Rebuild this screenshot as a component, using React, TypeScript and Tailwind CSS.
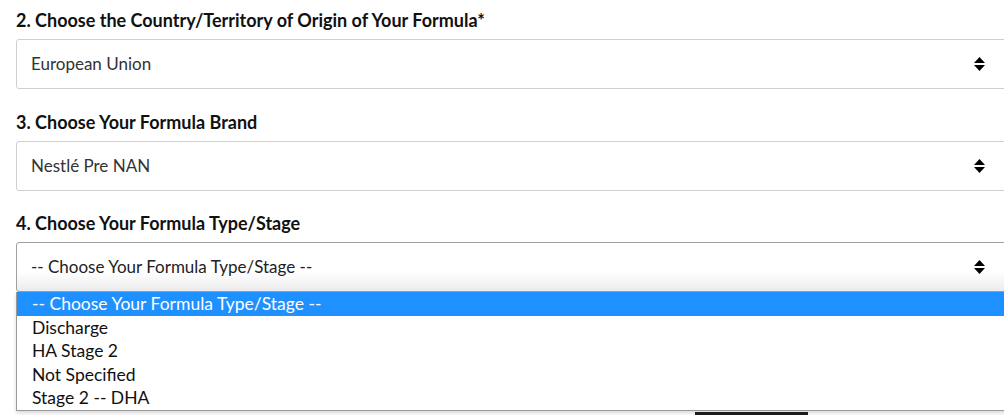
import React from 'react';

const font = { fontFamily: '"Lato", "Open Sans", Arial, sans-serif' };

const Arrows = () => (
  <svg width="11" height="14" viewBox="0 0 11 14" className="shrink-0">
    <path d="M5.5 0 L11 6 L0 6 Z" fill="#000" />
    <path d="M0 8 L11 8 L5.5 14 Z" fill="#000" />
  </svg>
);

const SelectBox = ({ value, focused }: { value: string; focused?: boolean }) => (
  <div
    className={
      'flex h-[50px] w-[1000px] items-center justify-between rounded-[3px] border pl-[14px] pr-[30px] text-[17px] ' +
      (focused
        ? 'border-[#a0a0a0] bg-gradient-to-b from-white from-60% to-[#ececec] text-[#222]'
        : 'border-[#cfcfcf] bg-white text-[#333]')
    }
  >
    <span>{value}</span>
    <Arrows />
  </div>
);

const options = ['-- Choose Your Formula Type/Stage --', 'Discharge', 'HA Stage 2', 'Not Specified', 'Stage 2 -- DHA'];

const App = () => {
  return (
    <div className="relative h-[415px] w-[1004px] overflow-hidden bg-white pl-4 pt-[11px]" style={font}>
      <h2 className="mb-[9px] text-[18px] font-bold leading-[19px] text-[#111]">
        2. Choose the Country/Territory of Origin of Your Formula*
      </h2>
      <SelectBox value="European Union" />

      <h2 className="mb-[9px] mt-[24px] text-[18px] font-bold leading-[19px] text-[#111]">3. Choose Your Formula Brand</h2>
      <SelectBox value="Nestlé Pre NAN" />

      <h2 className="mb-[9px] mt-[23px] text-[18px] font-bold leading-[19px] text-[#111]">
        4. Choose Your Formula Type/Stage
      </h2>
      <div className="relative">
        <SelectBox value="-- Choose Your Formula Type/Stage --" focused />
        <div className="absolute left-0 top-[50px] z-10 w-[1000px] border-b border-l border-[#9a9a9a] bg-white shadow-[0_2px_4px_rgba(0,0,0,0.15)]">
          {options.map((o, i) => (
            <div
              key={o}
              className={
                'h-[23.5px] pl-[15px] text-[17.5px] leading-[23.5px] ' +
                (i === 0 ? 'bg-[#1e90ff] text-white' : 'text-[#111]')
              }
            >
              {o}
            </div>
          ))}
        </div>
        <div className="ml-[679px] mt-[120px] h-[30px] w-[113px] bg-[#1e1e1e]" />
      </div>
    </div>
  );
};

export default App;
